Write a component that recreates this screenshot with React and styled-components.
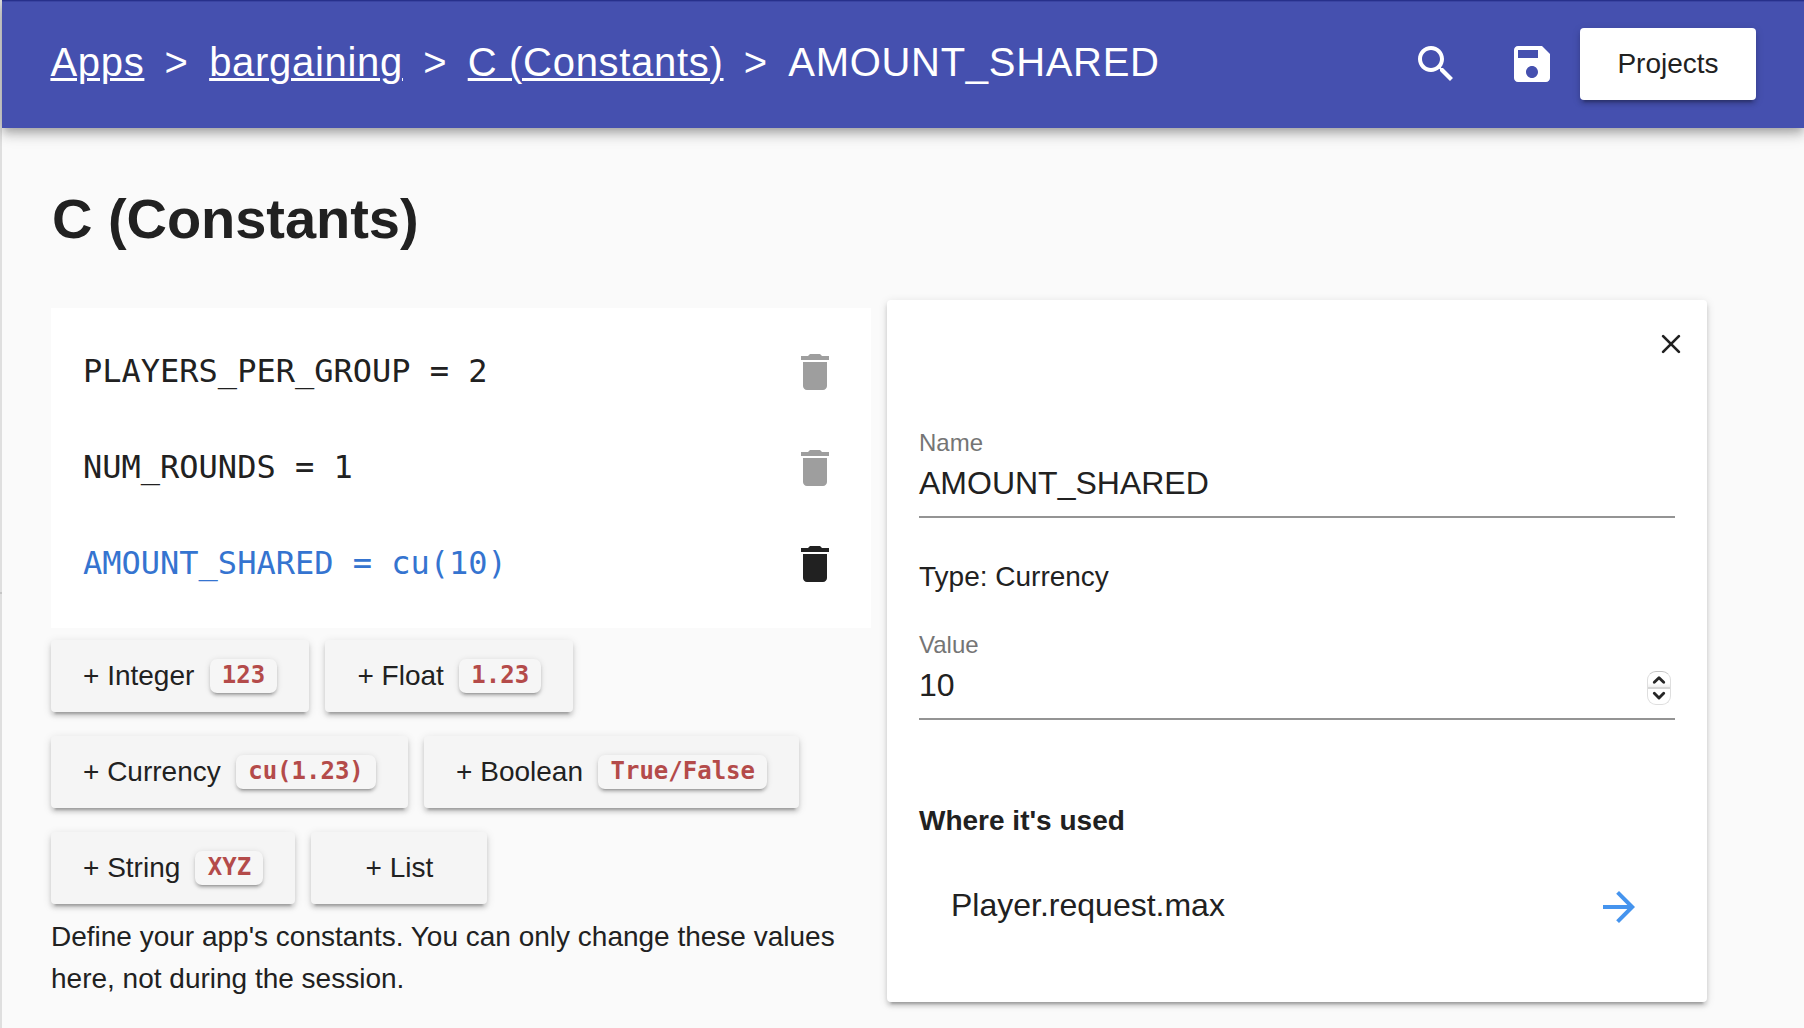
import React from "react";
import styled, { createGlobalStyle } from "styled-components";

const GlobalStyle = createGlobalStyle`
  *, *::before, *::after { box-sizing: border-box; }
  html, body { margin: 0; padding: 0; }
  body {
    background: #fafafa;
    color: #212121;
    font-family: "Liberation Sans", Helvetica, Arial, sans-serif;
    overflow: hidden;
  }
  button { font-family: inherit; color: inherit; border: 0; margin: 0; padding: 0; background: none; }
`;

const mono = `"DejaVu Sans Mono", Menlo, monospace`;
const raised = `
  0 6px 2px -4px rgba(0, 0, 0, 0.2),
  0 4px 4px 0 rgba(0, 0, 0, 0.14),
  0 2px 10px 0 rgba(0, 0, 0, 0.12)
`;

const Page = styled.div`
  display: flex;
  width: 1804px;
  height: 1028px;
  overflow: hidden;
`;

const Edge = styled.div`
  flex: none;
  width: 2px;
  padding-top: 592px;
  background: #dfdfdf;

  &::after {
    content: "";
    display: block;
    height: 2px;
    background: #c6c6c6;
  }
`;

const Main = styled.div`
  flex: 1;
  min-width: 0;
`;

const AppBar = styled.header`
  display: flex;
  align-items: center;
  height: 128px;
  padding: 0 48px;
  color: #fff;
  background: linear-gradient(#27308b 0 1px, #3a44a2 1px 2px, #4550af 2px);
  box-shadow:
    0 4px 8px -2px rgba(0, 0, 0, 0.2),
    0 8px 10px 0 rgba(0, 0, 0, 0.14),
    0 2px 20px 0 rgba(0, 0, 0, 0.12);
`;

const Breadcrumb = styled.nav`
  display: flex;
  flex: 1;
  padding: 0 0 4px 0.4px;
  font-size: 40px;
  line-height: 44px;
  letter-spacing: 0.7px;
  white-space: nowrap;
`;

const Crumb = styled.a`
  color: inherit;
  text-decoration: underline;
  text-decoration-thickness: 3px;
  text-underline-offset: 2px;
`;

const Separator = styled.span`
  margin: 0 20.5px 0 20.2px;
`;

const IconButton = styled.button`
  display: flex;
  flex: none;
  align-items: center;
  justify-content: center;
  width: ${(p) => p.$size}px;
  height: ${(p) => p.$size}px;
`;

const Icon = styled.svg`
  display: block;
  flex: none;
  width: 48px;
  height: 48px;
  fill: ${(p) => p.$color || "currentColor"};
`;

const Button = styled.button`
  display: flex;
  flex: none;
  align-items: center;
  justify-content: center;
  gap: 15.2px;
  min-width: 176px;
  height: 72px;
  padding: 0 32px;
  border-radius: 4px;
  color: #212121;
  background: ${(p) => (p.$white ? "#fff" : "#f5f5f5")};
  box-shadow: ${raised};
  font-size: 28px;
  line-height: 31px;
  white-space: nowrap;
`;

const ButtonLabel = styled.span`
  padding-bottom: 1px;
`;

const Chip = styled.code`
  height: 34px;
  padding: 3px 12.3px 0;
  border-radius: 7px;
  color: #b44b4a;
  background: #f6f6f6;
  box-shadow:
    0 5px 2px -4px rgba(0, 0, 0, 0.2),
    0 3px 3px 0 rgba(0, 0, 0, 0.16),
    0 1px 6px 0 rgba(0, 0, 0, 0.12);
  font: bold 24px/26px ${mono};
`;

const Title = styled.h1`
  margin: 59px 0 50px 50px;
  font-size: 56px;
  line-height: 63px;
  letter-spacing: -0.04px;
`;

const Columns = styled.div`
  display: flex;
  align-items: flex-start;
  gap: 16px;
  padding-left: 49px;
`;

const Column = styled.section`
  width: 820px;
  padding-top: 8px;
`;

const ConstantList = styled.div`
  padding: 16px 0;
  background: #fff;
`;

const ConstantRow = styled.div`
  display: flex;
  align-items: center;
  justify-content: space-between;
  height: 96px;
  padding: 0 32px;
  color: ${(p) => (p.$selected ? "#3574d0" : "#212121")};
`;

const Code = styled.span`
  padding-bottom: 2px;
  font: 32px/38px ${mono};
  white-space: pre;
`;

const ButtonWrap = styled.div`
  display: flex;
  flex-wrap: wrap;
  gap: 24px 16px;
  margin-top: 12px;
`;

const Help = styled.p`
  margin: 12px 0 0;
  font-size: 28px;
  line-height: 42px;
`;

const Card = styled.section`
  width: 820px;
  height: 702px;
  padding: 0 32px;
  border-radius: 4px;
  background: #fff;
  box-shadow: ${raised};
`;

const CardTop = styled.div`
  display: flex;
  align-items: center;
  justify-content: flex-end;
  height: 88px;
  margin-right: -20px;
`;

const Field = styled.div`
  margin-top: ${(p) => p.$top}px;
  border-bottom: 2px solid #949494;
`;

const FieldLabel = styled.div`
  color: #757575;
  font-size: 24px;
  line-height: 27px;
`;

const FieldValue = styled.div`
  display: flex;
  justify-content: space-between;
  height: 60px;
  padding: 7px 4px 0 0;
  font-size: 32px;
  line-height: 40px;
`;

const Stepper = styled.span`
  display: flex;
  flex-direction: column;
  width: 24px;
  height: 34px;
  margin-top: 6px;
  border: 1px solid #dedede;
  border-top-color: #c4c4c4;
  border-radius: 9px;
  background: linear-gradient(#fff 0 11px, #efefef 15px, #d6d6d6 15px 17px, #fff 17px);
`;

const Chevrons = styled.svg`
  width: 22px;
  height: 32px;
  fill: none;
  stroke: #262626;
  stroke-width: 2.9;
  stroke-linecap: round;
  stroke-linejoin: round;
`;

const TypeLine = styled.div`
  margin: 38px 0 0;
  font-size: 28px;
  line-height: 41px;
`;

const Subheading = styled.h2`
  margin: 80px 0 18px;
  font-size: 28px;
  line-height: 41px;
`;

const UsageRow = styled.div`
  display: flex;
  align-items: center;
  justify-content: space-between;
  height: 96px;
  padding: 0 32px;
`;

const UsageName = styled.span`
  padding-bottom: 4px;
  font-size: 32px;
  line-height: 36px;
`;

const paths = {
  search:
    "M15.5 14h-.79l-.28-.27C15.41 12.59 16 11.11 16 9.5 16 5.91 13.09 3 9.5 3S3 5.91 3 9.5 5.91 16 9.5 16c1.61 0 3.09-.59 4.23-1.57l.27.28v.79l5 4.99L20.49 19l-4.99-5zm-6 0C7.01 14 5 11.99 5 9.5S7.01 5 9.5 5 14 7.01 14 9.5 11.99 14 9.5 14z",
  save: "M17 3H5c-1.11 0-2 .9-2 2v14c0 1.1.89 2 2 2h14c1.1 0 2-.9 2-2V7l-4-4zm-5 16c-1.66 0-3-1.34-3-3s1.34-3 3-3 3 1.34 3 3-1.34 3-3 3zm3-10H5V5h10v4z",
  trash:
    "M6 19c0 1.1.9 2 2 2h8c1.1 0 2-.9 2-2V7H6v12zM19 4h-3.5l-1-1h-5l-1 1H5v2h14V4z",
  arrow: "M12 4l-1.41 1.41L16.17 11H4v2h12.17l-5.58 5.59L12 20l8-8z",
};

const Glyph = ({ name, color }) => (
  <Icon viewBox="0 0 24 24" $color={color} aria-hidden="true">
    <path d={paths[name]} />
  </Icon>
);

const crumbs = ["Apps", "bargaining", "C (Constants)"];

const constants = [
  { text: "PLAYERS_PER_GROUP = 2" },
  { text: "NUM_ROUNDS = 1" },
  { text: "AMOUNT_SHARED = cu(10)", selected: true },
];

const kinds = [
  ["Integer", "123"],
  ["Float", "1.23"],
  ["Currency", "cu(1.23)"],
  ["Boolean", "True/False"],
  ["String", "XYZ"],
  ["List"],
];

export default function App() {
  return (
    <>
      <GlobalStyle />
      <Page>
        <Edge />
        <Main>
          <AppBar>
            <Breadcrumb>
              {crumbs.map((label) => (
                <React.Fragment key={label}>
                  <Crumb>{label}</Crumb>
                  <Separator>&gt;</Separator>
                </React.Fragment>
              ))}
              <span>AMOUNT_SHARED</span>
            </Breadcrumb>
            <IconButton $size={96} aria-label="Search">
              <Glyph name="search" />
            </IconButton>
            <IconButton $size={96} aria-label="Save">
              <Glyph name="save" />
            </IconButton>
            <Button $white>
              <ButtonLabel>Projects</ButtonLabel>
            </Button>
          </AppBar>

          <Title>C (Constants)</Title>

          <Columns>
            <Column>
              <ConstantList>
                {constants.map((c) => (
                  <ConstantRow key={c.text} $selected={c.selected}>
                    <Code>{c.text}</Code>
                    <Glyph name="trash" color={c.selected ? "#212121" : "#9e9e9e"} />
                  </ConstantRow>
                ))}
              </ConstantList>
              <ButtonWrap>
                {kinds.map(([label, sample]) => (
                  <Button key={label}>
                    <ButtonLabel>+ {label}</ButtonLabel>
                    {sample && <Chip>{sample}</Chip>}
                  </Button>
                ))}
              </ButtonWrap>
              <Help>
                Define your app's constants. You can only change these values
                here, not during the session.
              </Help>
            </Column>

            <Card>
              <CardTop>
                <IconButton $size={48} aria-label="Close">
                  <svg width="20" height="20" viewBox="0 0 20 20">
                    <path
                      d="M2.1 2.1l15.8 15.8M17.9 2.1L2.1 17.9"
                      stroke="#212121"
                      strokeWidth="2.7"
                      strokeLinecap="round"
                    />
                  </svg>
                </IconButton>
              </CardTop>
              <Field $top={41}>
                <FieldLabel>Name</FieldLabel>
                <FieldValue>AMOUNT_SHARED</FieldValue>
              </Field>
              <TypeLine>Type: Currency</TypeLine>
              <Field $top={34}>
                <FieldLabel>Value</FieldLabel>
                <FieldValue>
                  10
                  <Stepper>
                    <Chevrons viewBox="0 0 22 32">
                      <path d="M6.3 10.2L11 5.7l4.7 4.5M6.3 21.3l4.7 4.7 4.7-4.7" />
                    </Chevrons>
                  </Stepper>
                </FieldValue>
              </Field>
              <Subheading>Where it's used</Subheading>
              <UsageRow>
                <UsageName>Player.request.max</UsageName>
                <Glyph name="arrow" color="#4594ee" />
              </UsageRow>
            </Card>
          </Columns>
        </Main>
      </Page>
    </>
  );
}
